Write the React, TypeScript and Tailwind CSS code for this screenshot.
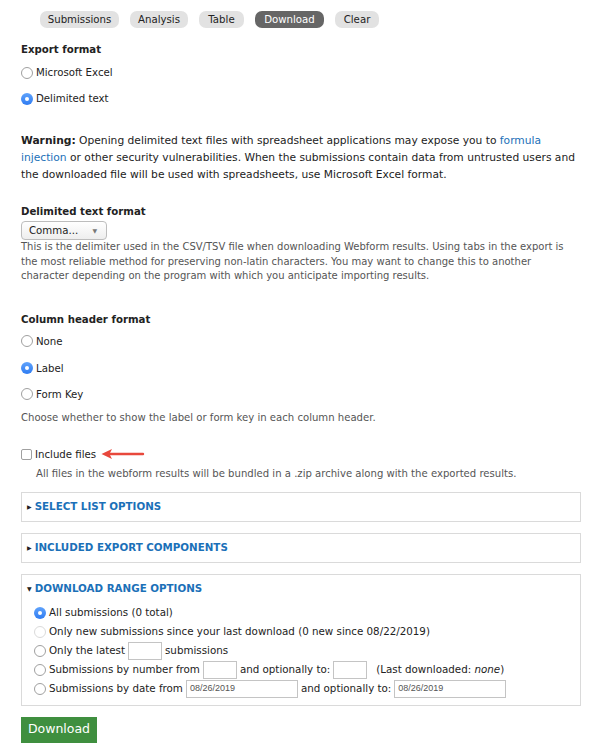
import React from 'react';

const font = { fontFamily: '"DejaVu Sans", sans-serif' };

function Radio({ checked = false, faded = false }: { checked?: boolean; faded?: boolean }) {
  if (checked) {
    return (
      <span className="inline-flex h-[12px] w-[12px] shrink-0 items-center justify-center rounded-full bg-gradient-to-b from-[#5fa2fb] to-[#2f7cf2]">
        <span className="h-[4px] w-[4px] rounded-full bg-white" />
      </span>
    );
  }
  return (
    <span
      className={
        'inline-block h-[12px] w-[12px] shrink-0 rounded-full border bg-white ' +
        (faded ? 'border-[#dadada]' : 'border-[#a0a0a0]')
      }
    />
  );
}

function TextBox({ w, value }: { w: string; value?: string }) {
  return (
    <span
      className={
        'inline-flex h-[18px] items-center border border-[#c4c4c4] bg-white px-[3px] text-[9px] text-[#555] ' + w
      }
      style={{ fontFamily: '"Liberation Sans", sans-serif' }}
    >
      {value}
    </span>
  );
}

function Details({ title, open = false, children }: { title: string; open?: boolean; children?: React.ReactNode }) {
  return (
    <div className="border border-[#dadada] bg-white">
      <div className="flex h-[28px] items-center gap-[3px] pl-[5px] text-[10.3px] font-bold text-[#1b70b8]">
        <span className="text-[6px] text-[#222]">{open ? '▼' : '▶'}</span>
        {title}
      </div>
      {children}
    </div>
  );
}

export default function App() {
  const tabs = [
    { label: 'Submissions', w: 'w-[79px]' },
    { label: 'Analysis', w: 'w-[58px]' },
    { label: 'Table', w: 'w-[45px]' },
    { label: 'Download', w: 'w-[69px]' },
    { label: 'Clear', w: 'w-[44px]' },
  ];

  return (
    <div className="min-h-[754px] w-[602px] bg-white text-[#222]" style={font}>
      <div className="flex gap-[11px] pl-[40px] pt-[11px]">
        {tabs.map((t) => (
          <span
            key={t.label}
            className={
              'flex h-[17px] items-center justify-center rounded-[7px] text-[10.2px] ' +
              t.w +
              ' ' +
              (t.label === 'Download' ? 'bg-[#666] text-white' : 'bg-[#e2e2e2] text-[#222]')
            }
          >
            {t.label}
          </span>
        ))}
      </div>

      <div className="px-[21px] text-[10.2px]">
        <h3 className="mt-[14px] font-bold leading-[15px]">Export format</h3>
        <label className="mt-[8px] flex items-center gap-[3px] leading-[15px]">
          <Radio />
          Microsoft Excel
        </label>
        <label className="mt-[11px] flex items-center gap-[3px] leading-[15px]">
          <Radio checked />
          Delimited text
        </label>

        <p className="mt-[26px] text-[10.7px] leading-[17px]">
          <b>Warning:</b> Opening delimited text files with spreadsheet applications may expose you to{' '}
          <span className="text-[#1b70b8]">formula injection</span> or other security vulnerabilities. When the
          submissions contain data from untrusted users and the downloaded file will be used with spreadsheets, use
          Microsoft Excel format.
        </p>

        <h3 className="mt-[21px] font-bold leading-[15px]">Delimited text format</h3>
        <div className="mt-[2px] flex h-[19px] w-[86px] items-center justify-between rounded-[4px] border border-[#bdbdbd] bg-gradient-to-b from-white to-[#eeeeee] pl-[7px] pr-[9px]">
          Comma...
          <span className="text-[6px] text-[#777]">▼</span>
        </div>
        <p className="text-[10px] leading-[14.5px] text-[#555]">
          This is the delimiter used in the CSV/TSV file when downloading Webform results. Using tabs in the export is
          the most reliable method for preserving non-latin characters. You may want to change this to another
          character depending on the program with which you anticipate importing results.
        </p>

        <h3 className="mt-[28px] font-bold leading-[15px]">Column header format</h3>
        <label className="mt-[7px] flex items-center gap-[3px] leading-[15px]">
          <Radio />
          None
        </label>
        <label className="mt-[12px] flex items-center gap-[3px] leading-[15px]">
          <Radio checked />
          Label
        </label>
        <label className="mt-[11px] flex items-center gap-[3px] leading-[15px]">
          <Radio />
          Form Key
        </label>
        <p className="mt-[8px] text-[10.1px] leading-[15px] text-[#555]">
          Choose whether to show the label or form key in each column header.
        </p>

        <div className="mt-[22px] flex items-center gap-[3px] leading-[15px]">
          <span className="h-[11px] w-[11px] rounded-[2px] border border-[#a0a0a0] bg-white" />
          Include files
          <svg width="44" height="12" viewBox="0 0 44 12" className="ml-[2px]">
            <path d="M8 6 H42" stroke="#e8483c" strokeWidth="2.4" strokeLinecap="round" />
            <path d="M0.5 6 L11 1 L8.5 6 L11 11 Z" fill="#e8483c" />
          </svg>
        </div>
        <p className="mt-[4px] pl-[15px] text-[10.1px] leading-[15px] text-[#555]">
          All files in the webform results will be bundled in a .zip archive along with the exported results.
        </p>

        <div className="mt-[11px] flex flex-col gap-[11px]">
          <Details title="SELECT LIST OPTIONS" />
          <Details title="INCLUDED EXPORT COMPONENTS" />
          <Details title="DOWNLOAD RANGE OPTIONS" open>
            <div className="flex flex-col gap-[2px] pb-[7px] pl-[12px] pt-[2px] text-[10.3px]">
              <label className="flex h-[17px] items-center gap-[3px]">
                <Radio checked />
                All submissions (0 total)
              </label>
              <label className="flex h-[17px] items-center gap-[3px]">
                <Radio faded />
                Only new submissions since your last download (0 new since 08/22/2019)
              </label>
              <label className="flex h-[17px] items-center gap-[3px]">
                <Radio />
                Only the latest
                <TextBox w="w-[34px]" />
                submissions
              </label>
              <label className="flex h-[17px] items-center gap-[3px]">
                <Radio />
                Submissions by number from
                <TextBox w="w-[34px]" />
                and optionally to:
                <TextBox w="w-[34px]" />
                <span className="ml-[6px]">
                  (Last downloaded: <i>none</i>)
                </span>
              </label>
              <label className="flex h-[17px] items-center gap-[3px]">
                <Radio />
                Submissions by date from
                <TextBox w="w-[112px]" value="08/26/2019" />
                and optionally to:
                <TextBox w="w-[112px]" value="08/26/2019" />
              </label>
            </div>
          </Details>
        </div>

        <button className="mt-[11px] h-[26px] w-[76px] bg-[#3f8f3f] text-[12.5px] text-white">Download</button>
      </div>
    </div>
  );
}
